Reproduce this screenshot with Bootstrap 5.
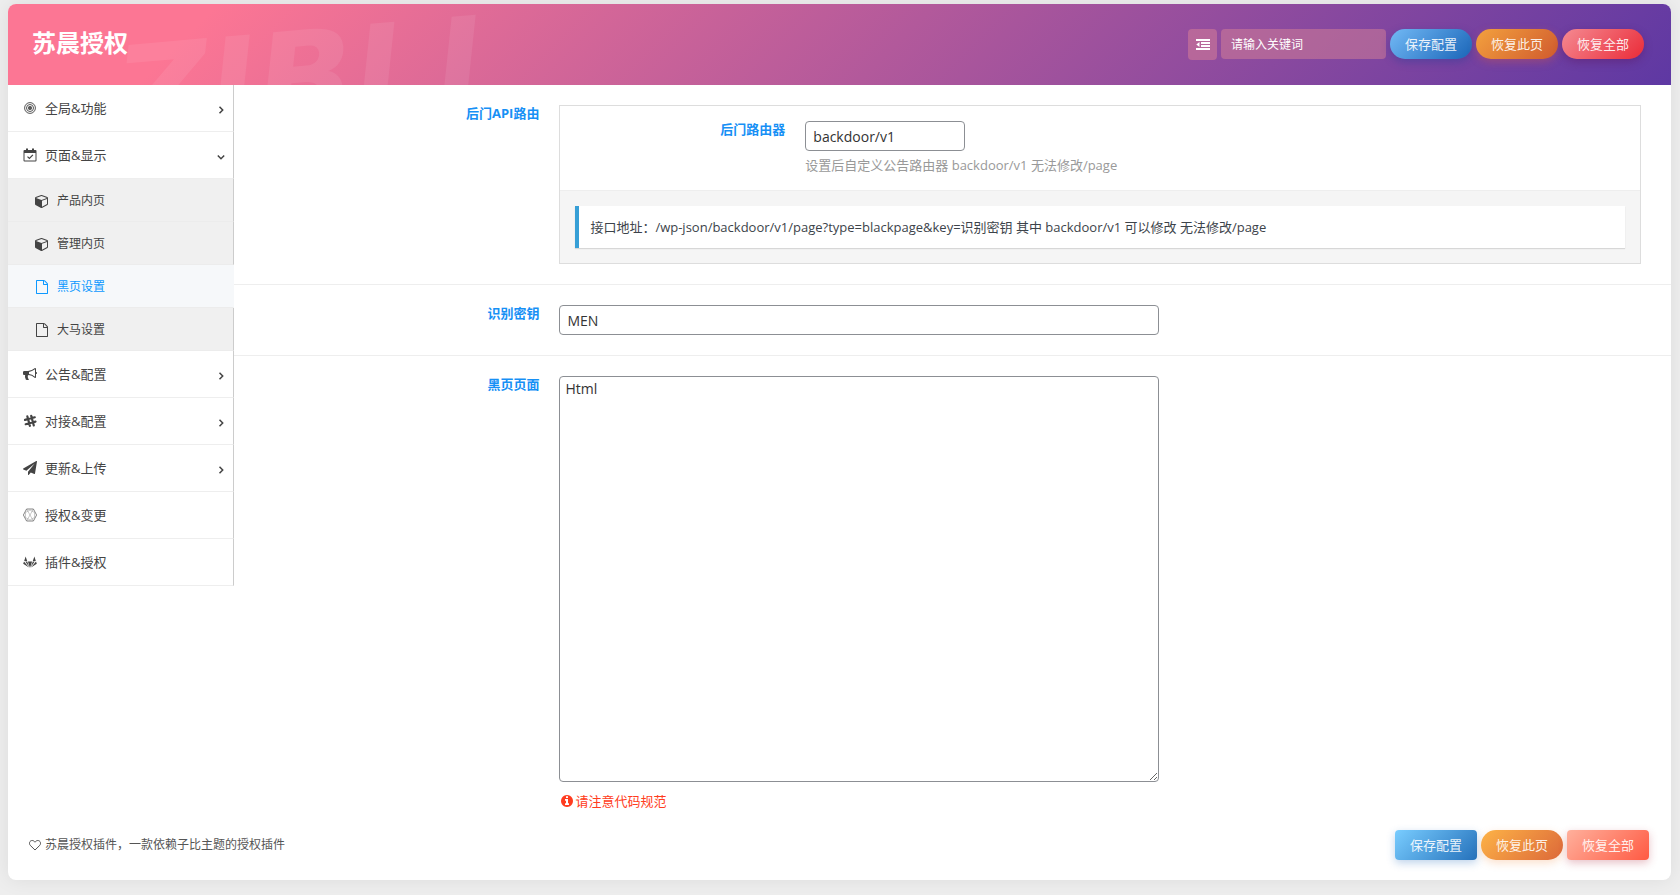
<!DOCTYPE html>
<html lang="zh-CN">
<head>
<meta charset="utf-8">
<meta name="viewport" content="width=device-width, initial-scale=1">
<title>苏晨授权</title>
<link href="https://cdn.jsdelivr.net/npm/bootstrap@5.3.0/dist/css/bootstrap.min.css" rel="stylesheet">
<style>
  body { background: #eee; color: #444; font-family: "Open Sans", "Noto Sans CJK SC", sans-serif; font-size: 13px; line-height: 20px; padding: 4px 9px 15px 8px; }
  svg { display: block; fill: currentColor; flex: none; }
  .panel-box { background: #fff; border-radius: 8px; box-shadow: 0 0 20px rgba(0,0,0,.08); overflow: hidden; }
  .top-bar { position: relative; overflow: hidden; height: 81px; padding: 0 27px 0 24px; background: linear-gradient(135deg, #fc7694 12%, #5e38a3 100%); }
  .top-bar h1 { font-size: 24px; line-height: 32px; font-weight: 700; color: #fff; padding-bottom: 4px; }
  .watermark { position: absolute; left: 108px; top: 10px; font: italic 800 128px/128px "DejaVu Sans", sans-serif; color: rgba(255,255,255,.08); transform: rotate(-5deg); pointer-events: none; }
  .tools { position: relative; gap: 4px; }
  .toggle-btn { width: 29px; height: 31px; border: 0; border-radius: 4px; background: rgba(220,130,150,.5); color: #fff; padding: 0; }
  .search-box { width: 165px; height: 30px; border: 0; border-radius: 4px; background: rgba(215,130,150,.5); color: #fff; font-size: 12px; padding: 0 10px; }
  .search-box::placeholder { color: #fff; opacity: 1; }
  .act { width: 82px; height: 30px; padding: 0; border: 0; font-size: 13px; line-height: 30px; color: rgba(255,255,255,.9); border-radius: 4px; }
  .act:hover { color: #fff; }
  .round { border-radius: 15px; }
  .blue-a { background: linear-gradient(135deg, #72b9f5, #1a65b8); box-shadow: 0 3px 8px rgba(20,60,150,.35); }
  .orange-a { background: linear-gradient(135deg, #f3a13e, #d05a2e); box-shadow: 0 3px 8px rgba(220,90,60,.35); }
  .red-a { background: linear-gradient(135deg, #f58a92, #ea2b38); box-shadow: 0 3px 8px rgba(90,20,90,.4); }
  .blue-b { background: linear-gradient(135deg, #79cdff, #2571bb); box-shadow: 0 3px 8px rgba(40,110,190,.3); }
  .orange-b { background: linear-gradient(135deg, #fdb347, #dc6839); box-shadow: 0 3px 8px rgba(240,130,50,.25); }
  .red-b { background: linear-gradient(135deg, #ffb09c, #ff5a43); box-shadow: 0 3px 8px rgba(180,50,70,.3); }
  .side { width: 226px; flex: none; }
  .side a { display: flex; align-items: center; height: 47px; padding: 0 8px 0 15px; gap: 8px; color: #444; text-decoration: none; border-bottom: 1px solid #eee; border-right: 1px solid #ccc; }
  .side .sub a { height: 43px; padding: 2px 8px 0 27px; font-size: 12px; background: #f0f0f0; border-bottom-color: #ececec; }
  .side .sub a.active { color: #0d99ff; background: #f6f8fa; border-right-color: #f6f8fa; }
  .chev { width: 8px; height: 8px; margin: 3px 0 0 auto; fill: none; stroke: #444; stroke-width: 1.5; }
  .main-col { min-width: 0; }
  .field { padding: 20px 30px; gap: 20px; }
  .field + .field { border-top: 1px solid #eee; }
  .field-name { width: 20%; flex: none; text-align: right; font-weight: 700; color: #1790f5; line-height: 16px; }
  .group { border: 1px solid #ddd; }
  .group .field { padding: 15px; }
  .inp { border: 1px solid #8c8f94; border-radius: 4px; height: 30px; font-size: 14px; color: #333; padding: 0 7px; background: #fff; display: block; }
  .short { width: 160px; }
  .long { width: 600px; max-width: 100%; }
  textarea.long { height: 406px; padding: 2px 5px; line-height: 20px; }
  .hint { color: #999; margin-top: 4px; }
  .note { background: #f5f5f5; border-top: 1px solid #eee; padding: 15px; }
  .note p { background: #fff; border-left: 4px solid #379fd6; padding: 11px; line-height: 20px; box-shadow: 0 1px 1px rgba(0,0,0,.12); color: #3c434a; }
  .warn { color: #ff3c20; margin: 9px 0 0 2px; gap: 2px; }
  .foot { padding: 19px 22px 20px 21px; font-size: 12px; color: #555; }
</style>
</head>
<body>
<div class="panel-box">
  <header class="top-bar d-flex align-items-center justify-content-between">
    <span class="watermark" aria-hidden="true">ZIBLL</span>
    <h1 class="m-0 position-relative">苏晨授权</h1>
    <form class="tools d-flex">
      <button type="button" class="toggle-btn d-flex align-items-center justify-content-center" aria-label="展开">
        <svg width="14" height="11" viewBox="0 0 14 11"><path d="M0 0h14v2H0zM5 3h9v2H5zM5 6h9v2H5zM0 9h14v2H0zM3.500 3v5L.3 5.500z"/></svg>
      </button>
      <input class="search-box" type="text" placeholder="请输入关键词" aria-label="搜索">
      <button type="button" class="btn act round blue-a">保存配置</button>
      <button type="button" class="btn act round orange-a">恢复此页</button>
      <button type="button" class="btn act round red-a">恢复全部</button>
    </form>
  </header>

  <div class="d-flex align-items-start">
    <nav class="side">
      <a href="#"><svg width="14" height="12" viewBox="0 0 14 12" style="fill:none" stroke="currentColor"><circle cx="7" cy="6" r="5.400" stroke-width=".9"/><circle cx="7" cy="6" r="3.500" stroke-width=".9"/><circle cx="7" cy="6" r="1.200" stroke-width="1.600"/></svg><span>全局&amp;功能</span><svg class="chev" viewBox="0 0 8 8"><path d="M2.500 .8L5.700 4 2.500 7.200"/></svg></a>
      <a href="#"><svg width="14" height="14" viewBox="0 0 14 14"><path fill-rule="evenodd" d="M1.500 2H3V.5h2V2h4V.5h2V2h1.500q1 0 1 1v9.500q0 1-1 1h-11q-1 0-1-1V3q0-1 1-1zM1.500 5v7.500h11V5z"/><path d="M4.500 8.600l1.900 1.900 3.500-3.700" style="fill:none" stroke="currentColor" stroke-width="1.200"/></svg><span>页面&amp;显示</span><svg class="chev" viewBox="0 0 8 8"><path d="M.8 2.500L4 5.700l3.200-3.200"/></svg></a>
      <div class="sub">
        <a href="#"><svg width="14" height="14" viewBox="0 0 1792 1792"><path d="M896 1629l640-349v-636l-640 233v752zm-64-865l698-254-698-254-698 254zm832-252v768q0 35-18 65t-49 47l-704 384q-28 16-61 16t-61-16l-704-384q-31-17-49-47t-18-65v-768q0-40 23-73t61-50l704-256q22-8 44-8t44 8l704 256q38 17 61 50t23 73z"/></svg><span>产品内页</span></a>
        <a href="#"><svg width="14" height="14" viewBox="0 0 1792 1792"><path d="M896 1629l640-349v-636l-640 233v752zm-64-865l698-254-698-254-698 254zm832-252v768q0 35-18 65t-49 47l-704 384q-28 16-61 16t-61-16l-704-384q-31-17-49-47t-18-65v-768q0-40 23-73t61-50l704-256q22-8 44-8t44 8l704 256q38 17 61 50t23 73z"/></svg><span>管理内页</span></a>
        <a href="#" class="active" aria-current="page"><svg width="14" height="14" viewBox="0 0 1792 1792"><path d="M1596 380q28 28 48 76t20 88v1152q0 40-28 68t-68 28h-1344q-40 0-68-28t-28-68v-1600q0-40 28-68t68-28h896q40 0 88 20t76 48zm-444-244v376h376q-10-29-22-41l-313-313q-12-12-41-22zm384 1528v-1024h-416q-40 0-68-28t-28-68v-416h-768v1536h1280z"/></svg><span>黑页设置</span></a>
        <a href="#"><svg width="14" height="14" viewBox="0 0 1792 1792"><path d="M1596 380q28 28 48 76t20 88v1152q0 40-28 68t-68 28h-1344q-40 0-68-28t-28-68v-1600q0-40 28-68t68-28h896q40 0 88 20t76 48zm-444-244v376h376q-10-29-22-41l-313-313q-12-12-41-22zm384 1528v-1024h-416q-40 0-68-28t-28-68v-416h-768v1536h1280z"/></svg><span>大马设置</span></a>
      </div>
      <a href="#"><svg width="14" height="14" viewBox="0 0 1792 1792"><path d="M1664 640q53 0 90.500 37.500t37.500 90.500-37.500 90.500-90.500 37.500v384q0 52-38 90t-90 38q-417-347-812-380-58 19-91 66t-31 100.500 40 92.500q-20 33-23 65.500t6 58 33.500 55 48 50 61.500 50.500q-29 58-111.500 83t-168.500 11.500-132-55.500q-7-23-29.500-87.500t-32-94.500-23-89-15-101 3.500-98.500 22-110.500h-122q-66 0-113-47t-47-113v-192q0-66 47-113t113-47h480q435 0 896-384 52 0 90 38t38 90v384zm-128 604v-954q-394 302-768 343v270q377 42 768 341z"/></svg><span>公告&amp;配置</span><svg class="chev" viewBox="0 0 8 8"><path d="M2.500 .8L5.700 4 2.500 7.200"/></svg></a>
      <a href="#"><svg width="14" height="14" viewBox="0 0 14 14" style="fill:none" stroke="currentColor" stroke-width="2.200" stroke-linecap="round"><path d="M4.300 2.300l2.600 9.600M8.200 1.900l2.600 9.600M2 5.900l9.800-2.600M2.700 10.200l9.800-2.600"/></svg><span>对接&amp;配置</span><svg class="chev" viewBox="0 0 8 8"><path d="M2.500 .8L5.700 4 2.500 7.200"/></svg></a>
      <a href="#"><svg width="14" height="14" viewBox="0 0 1792 1792"><path d="M1764 11q33 24 27 64l-256 1536q-5 29-32 45-14 8-31 8-11 0-24-5l-453-185-242 295q-18 23-49 23-13 0-22-4-19-7-30.500-23.500t-11.500-36.500v-349l864-1059-1069 925-395-162q-37-14-40-55-2-40 32-59l1664-960q15-9 32-9 20 0 36 11z"/></svg><span>更新&amp;上传</span><svg class="chev" viewBox="0 0 8 8"><path d="M2.500 .8L5.700 4 2.500 7.200"/></svg></a>
      <a href="#"><svg width="14" height="14" viewBox="0 0 14 14" style="fill:none" stroke="#777" stroke-width=".4"><path stroke-width=".9" d="M3.600 1h6.800L13.600 7l-3.200 6H3.600L.4 7z"/><path d="M3.600 1L10.400 13M10.400 1L3.600 13M2.500 4.500l4.500-2.500 4.500 2.500v5L7 12l-4.500-2.500z"/></svg><span>授权&amp;变更</span></a>
      <a href="#"><svg width="14" height="14" viewBox="0 0 14 14"><path d="M2.600 1.500L4.200 6H1.200zM11.400 1.500L12.800 6H9.800zM1 6.400L6 12.600.2 8.800zM13 6.400L8 12.600l5.800-3.800zM2.300 6.600h1.900l2 5.400zM11.700 6.600H9.800l-2 5.400zM4.900 6.600h4.200L7 13z"/></svg><span>插件&amp;授权</span></a>
    </nav>

    <main class="main-col flex-grow-1">
      <div class="field d-flex">
        <div class="field-name">后门API路由</div>
        <div class="group flex-grow-1">
          <div class="field d-flex">
            <label class="field-name" for="route">后门路由器</label>
            <div class="flex-grow-1">
              <input id="route" class="inp short" type="text" value="backdoor/v1">
              <div class="hint">设置后自定义公告路由器 backdoor/v1 无法修改/page</div>
            </div>
          </div>
          <div class="note"><p class="m-0">接口地址：/wp-json/backdoor/v1/page?type=blackpage&amp;key=识别密钥 其中 backdoor/v1 可以修改 无法修改/page</p></div>
        </div>
      </div>
      <div class="field d-flex">
        <label class="field-name" for="secret">识别密钥</label>
        <div class="flex-grow-1"><input id="secret" class="inp long" type="text" value="MEN"></div>
      </div>
      <div class="field d-flex pb-0">
        <label class="field-name" for="page">黑页页面</label>
        <div class="flex-grow-1">
          <textarea id="page" class="inp long">Html</textarea>
          <div class="warn d-flex align-items-center"><svg width="12" height="12" viewBox="128 128 1536 1536"><path d="M1152 1376v-160q0-14-9-23t-23-9h-96v-512q0-14-9-23t-23-9h-320q-14 0-23 9t-9 23v160q0 14 9 23t23 9h96v320h-96q-14 0-23 9t-9 23v160q0 14 9 23t23 9h448q14 0 23-9t9-23zm-128-896v-160q0-14-9-23t-23-9h-192q-14 0-23 9t-9 23v160q0 14 9 23t23 9h192q14 0 23-9t9-23zm640 416q0 209-103 385.500t-279.500 279.500-385.500 103-385.500-103-279.500-279.500-103-385.500 103-385.500 279.500-279.500 385.500-103 385.500 103 279.500 279.500 103 385.500z"/></svg><span>请注意代码规范</span></div>
        </div>
      </div>
    </main>
  </div>

  <footer class="foot d-flex align-items-center justify-content-between">
    <div class="d-flex align-items-center gap-1"><svg width="12" height="12" viewBox="0 0 12 12" style="fill:none" stroke="currentColor"><path d="M6 11L1.200 6.300C-.3 4.500 .6 1.500 3.200 1.500 4.600 1.500 5.500 2.500 6 3.200 6.500 2.500 7.400 1.500 8.800 1.500c2.600 0 3.500 3 2 4.800z"/></svg><span>苏晨授权插件，一款依赖子比主题的授权插件</span></div>
    <div class="tools d-flex">
      <button type="button" class="btn act blue-b">保存配置</button>
      <button type="button" class="btn act round orange-b">恢复此页</button>
      <button type="button" class="btn act red-b">恢复全部</button>
    </div>
  </footer>
</div>
<script src="https://cdn.jsdelivr.net/npm/bootstrap@5.3.0/dist/js/bootstrap.bundle.min.js"></script>
</body>
</html>
